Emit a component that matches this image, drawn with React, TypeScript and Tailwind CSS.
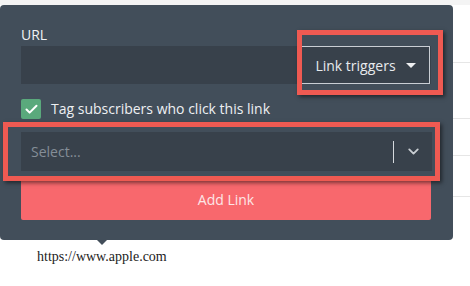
import React from "react";
import { Check, ChevronDown } from "lucide-react";

const font = "font-['Open_Sans',sans-serif]";

export default function App() {
  return (
    <div className={`relative w-[470px] h-[286px] overflow-hidden bg-white ${font}`}>
      <div className="h-[5px] bg-[#f4f4f4]" />

      <div className="flex">
        {/* popover */}
        <div className="relative w-[453px] h-[235px] rounded-[4px] bg-[#424e5a] pl-[21px] pr-[22px] pt-[20px]">
          <label className="block text-[14px] leading-[20px] text-[#f1f3f5]">URL</label>
          <div className="mt-[1px] flex h-[38px] w-[410px] bg-[#38414b]">
            <input className="flex-1 bg-transparent outline-none" />
            <button className="mr-[1px] flex w-[129px] items-center justify-center gap-[10px] border border-[#c9ced4] text-[14px] text-[#e8ebee]">
              Link triggers
              <span className="h-0 w-0 border-x-[5px] border-t-[5px] border-x-transparent border-t-[#eef0f2]" />
            </button>
          </div>

          <div className="mt-[15px] flex items-center gap-[10px]">
            <span className="flex h-[20px] w-[20px] items-center justify-center rounded-[2px] bg-[#5aa97c]">
              <Check size={15} strokeWidth={3.2} color="#ffffff" />
            </span>
            <span className="text-[14px] leading-[20px] text-[#eef0f2]">Tag subscribers who click this link</span>
          </div>

          <div className="mt-[13px] flex h-[39px] w-[411px] items-center bg-[#38414b] pl-[10px]">
            <span className="flex-1 text-[14px] text-[#858e98]">Select...</span>
            <span className="h-[22px] w-px bg-[#d5d9dd]" />
            <span className="flex w-[38px] items-center justify-center">
              <ChevronDown size={17} strokeWidth={2.6} color="#c9ced3" />
            </span>
          </div>

          <button className="mt-[7px] flex h-[42px] w-[410px] items-center justify-center rounded-b-[2px] bg-[#f8686d] text-[14px] text-[#fde6e7]">
            Add Link
          </button>

          <span className="absolute left-[97px] top-full h-0 w-0 border-x-[5px] border-t-[5px] border-x-transparent border-t-[#424e5a]" />
        </div>

        {/* underlying table rows */}
        <div className="flex-1">
          <div className="h-[58px] border-b border-[#e6e6e6]" />
          <div className="h-[56px] border-b border-[#e6e6e6]" />
          <div className="h-[37px] border-b border-[#e6e6e6]" />
          <div className="h-[41px] border-b border-[#e6e6e6]" />
        </div>
      </div>

      <p className="mt-[9px] pl-[37px] font-['Liberation_Serif',serif] text-[14px] leading-[16px] text-[#222]">
        https://www.apple.com
      </p>

      {/* annotation highlights */}
      <div className="pointer-events-none absolute left-[297px] top-[30px] h-[65px] w-[146px] border-[5px] border-[#ef5a52] shadow-[2px_2px_4px_rgba(0,0,0,0.5)]" />
      <div className="pointer-events-none absolute left-[3px] top-[122px] h-[59px] w-[437px] border-[5px] border-[#ef5a52] shadow-[2px_2px_4px_rgba(0,0,0,0.5)]" />
    </div>
  );
}
